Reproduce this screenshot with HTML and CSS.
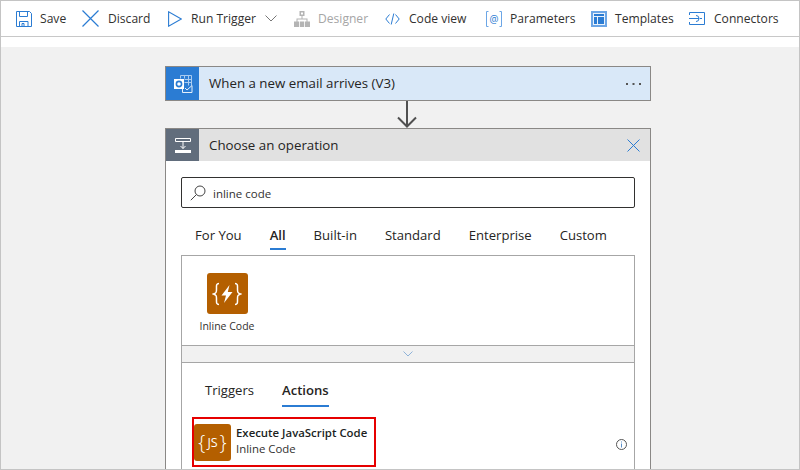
FILE: index.html
```html
<!DOCTYPE html>
<html lang="en">
<head>
    <meta charset="UTF-8">
    <title>Logic App Designer</title>
    <link rel="stylesheet" href="styles.css">
</head>
<body>
    <div class="frame">
        <div class="toolbar">
            <div class="tool tool-save">
                <svg width="16" height="16" viewBox="0 0 16 16" fill="none" stroke="#2b7cd3"><path d="M.5.5h13l2 2v13H.5z"/><path d="M3.500.5v5h8v-5M3.500 15.500v-5h8.500v5M6 15.500v-3h2v3"/></svg>
                <span>Save</span>
            </div>
            <div class="tool tool-discard">
                <svg width="17" height="17" viewBox="0 0 17 17" fill="none" stroke="#2b7cd3" stroke-width="1.200"><path d="M.5.5l16 16M16.500.5l-16 16"/></svg>
                <span>Discard</span>
            </div>
            <div class="tool tool-run">
                <svg width="14" height="16" viewBox="0 0 14 16" fill="none" stroke="#2b7cd3" stroke-width="1.100"><path d="M.6.800v14.400L13.300 8z"/></svg>
                <span>Run Trigger</span>
                <svg width="12" height="7" viewBox="0 0 12 7" fill="none" stroke="#777"><path d="M.5.500L6 6l5.500-5.500"/></svg>
            </div>
            <div class="tool tool-designer off">
                <svg width="16" height="16" viewBox="0 0 16 16" fill="#b4b4b4"><path d="M5.500 0h5v5h-5zM7 1.500v2h2v-2zM7.500 5h1v3h-1zM2.500 7.500h11v3h-1v-2h-9v2h-1zM0 10.500h5V16H0zM5.800 10.500h4.400V16H5.800zM11 10.500h5V16h-5z"/></svg>
                <span>Designer</span>
            </div>
            <div class="tool tool-code">
                <svg width="15" height="12" viewBox="0 0 15 12" fill="none" stroke="#2b7cd3"><path d="M4.500 1.500L.8 6l3.700 4.500M10.500 1.500L14.200 6l-3.700 4.500M8.800.500L6.200 11.500"/></svg>
                <span>Code view</span>
            </div>
            <div class="tool tool-params">
                <svg width="16" height="16" viewBox="0 0 16 16" fill="none" stroke="#6ca6e6"><path d="M2.500.500h-2v15h2M13.500.500h2v15h-2"/><text x="8" y="11.500" text-anchor="middle" class="params-at">@</text></svg>
                <span>Parameters</span>
            </div>
            <div class="tool tool-templates">
                <svg width="16" height="16" viewBox="0 0 16 16"><path fill="#6ca6e6" d="M0 0h16v16H0z"/><path fill="#eaf2fb" d="M2 2h12v12H2z"/><path fill="#2b7cd3" d="M3 3h10v2H3zM3 6h3v7H3zM7 6h6v7H7z"/></svg>
                <span>Templates</span>
            </div>
            <div class="tool tool-connectors">
                <svg width="16" height="13" viewBox="0 0 16 13" fill="none" stroke="#2b7cd3"><path d="M.5 3V.5h15v12H.5V10"/><path d="M0 6.500h10M7 3.500a3 3 0 0 1 0 6M11 6.500h2"/></svg>
                <span>Connectors</span>
            </div>
        </div>

        <div class="canvas">
            <div class="card trigger">
                <div class="card-icon icon-outlook">
                    <svg width="20" height="20" viewBox="0 0 20 20"><path fill="none" stroke="#a9cbf0" d="M7.500 1.500h11v10M7.500 1.500v3M11.500 1.500v3M15.500 1.500v10M11.500 5.500h7M11.500 8.500h7"/><path fill="none" stroke="#e4effb" d="M9.500 12.500v6h9.500v-7l-5 4.500-2-2"/><path fill="#fff" d="M1 5h10v10H1z"/><circle cx="6" cy="10" r="2.600" fill="none" stroke="#2b7cd3" stroke-width="1.600"/></svg>
                </div>
                <div class="card-title">When a new email arrives (V3)</div>
                <svg class="more" width="15" height="2" viewBox="0 0 15 2" fill="#555"><path d="M0 0h2v2H0zM6.500 0h2v2h-2zM13 0h2v2h-2z"/></svg>
            </div>

            <svg class="arrow" width="20" height="27" viewBox="0 0 20 27" fill="none" stroke="#505050" stroke-width="2"><path d="M10 0v25M1 16.500L10 25.500l9-9"/></svg>

            <div class="card chooser">
                <div class="chooser-head">
                    <div class="card-icon icon-choose">
                        <svg width="16" height="15" viewBox="0 0 16 15" fill="none" stroke="#fff"><path d="M.5.500h15v3H.5zM8 3.500v7M5.500 8L8 10.500 10.500 8"/><path fill="#fff" stroke="none" d="M0 12h16v3H0z"/></svg>
                    </div>
                    <div class="card-title">Choose an operation</div>
                    <svg class="close" width="13" height="13" viewBox="0 0 13 13" fill="none" stroke="#2b7cd3"><path d="M.5.500l12 12M12.500.500l-12 12"/></svg>
                </div>

                <div class="chooser-body">
                    <div class="search">
                        <svg width="16" height="16" viewBox="0 0 16 16" fill="none" stroke="#444"><circle cx="10" cy="6" r="5"/><path d="M6.500 9.500L.8 15.200"/></svg>
                        <span>inline code</span>
                    </div>

                    <div class="tabs">
                        <div class="tab">For You</div>
                        <div class="tab active">All</div>
                        <div class="tab">Built-in</div>
                        <div class="tab">Standard</div>
                        <div class="tab">Enterprise</div>
                        <div class="tab">Custom</div>
                    </div>

                    <div class="results">
                        <div class="connector">
                            <div class="tile tile-big">
                                <svg width="30" height="24" viewBox="0 0 30 24" fill="none" stroke="#fff" stroke-width="1.500"><path d="M7 1.500C4 1.500 4.500 4 4.500 7S4.500 11 1.500 12c3 1 3 2 3 5s-.5 5.500 2.500 5.500M23 1.500c3 0 2.500 2.500 2.500 5.500s0 4 3 5c-3 1-3 2-3 5s.5 5.500-2.500 5.500"/><path fill="#fff" stroke="none" d="M17.500 3L9.500 13.500h4.500L12 21 20.500 10h-4.700z"/></svg>
                            </div>
                            <div class="connector-name">Inline Code</div>
                        </div>
                    </div>

                    <div class="expander">
                        <svg width="10" height="6" viewBox="0 0 10 6" fill="none" stroke="#8fb3d9"><path d="M.5.500L5 5 9.500.500"/></svg>
                    </div>

                    <div class="actions-pane">
                        <div class="tabs tabs-sub">
                            <div class="tab">Triggers</div>
                            <div class="tab active">Actions</div>
                        </div>
                        <div class="action-row">
                            <div class="highlight">
                                <div class="tile tile-small">
                                    <span class="brace">{</span><span class="js">JS</span><span class="brace">}</span>
                                </div>
                                <div class="action-text">
                                    <div class="action-name">Execute JavaScript Code</div>
                                    <div class="action-sub">Inline Code</div>
                                </div>
                            </div>
                            <svg class="info" width="11" height="11" viewBox="0 0 11 11" fill="none" stroke="#555"><circle cx="5.500" cy="5.500" r="5"/><path d="M5.500 4.500v4M5.500 2.500v1" stroke="#5a8fc8"/></svg>
                        </div>
                    </div>
                </div>
            </div>
        </div>
    </div>
</body>
</html>
```

FILE: styles.css
```css
* {
    box-sizing: border-box;
}

body {
    margin: 0;
    width: 800px;
    height: 470px;
    overflow: hidden;
    font-family: "Open Sans", "Noto Sans", sans-serif;
    font-size: 12.1px;
    color: #323130;
    background-color: #fff;
}

.frame {
    height: 470px;
    display: flex;
    flex-direction: column;
    border: 1px solid #c4c4c4;
    overflow: hidden;
}

/* toolbar */
.toolbar {
    flex: none;
    height: 36px;
    display: flex;
    align-items: center;
    padding-left: 15px;
    border-bottom: 1px solid #c8c8c8;
}

.tool {
    display: flex;
    align-items: center;
    gap: 8px;
    white-space: nowrap;
}

.tool-save { width: 66px; }
.tool-discard { width: 86px; gap: 9px; }
.tool-run { width: 126px; gap: 9px; }
.tool-designer { width: 91px; }
.tool-code { width: 101px; gap: 9px; }
.tool-params { width: 105px; }
.tool-templates { width: 98px; }
.tool-connectors { gap: 9px; }

.off {
    color: #a6a6a6;
}

.params-at {
    font-size: 10px;
    fill: #2b7cd3;
    stroke: none;
}

/* canvas */
.canvas {
    flex: 1;
    margin-top: 10px;
    display: flex;
    flex-direction: column;
    align-items: center;
    padding: 19px 0 0 16px;
    background-color: #f1f1f1;
}

.card {
    flex: none;
    width: 486px;
    border: 1px solid #8a8886;
}

.trigger {
    height: 35px;
    display: flex;
    align-items: center;
    background-color: #d9e8f8;
}

.card-icon {
    flex: none;
    width: 33px;
    height: 100%;
    display: flex;
    align-items: center;
    justify-content: center;
}

.icon-outlook { background-color: #2b7cd3; }
.icon-choose { background-color: #616d7c; }

.card-title {
    flex: 1;
    padding: 0 0 2px 10px;
    font-size: 13.3px;
    color: #252423;
}

.more {
    margin-right: 9px;
}

.arrow {
    flex: none;
    display: block;
    margin-right: 3px;
}

.chooser {
    background-color: #fff;
    border-bottom: 0;
}

.chooser-head {
    height: 32px;
    display: flex;
    align-items: center;
    background-color: #e1e1e1;
}

.chooser-head .card-title {
    padding-bottom: 0;
}

.close {
    margin-right: 10px;
}

.chooser-body {
    padding: 16px 15px 0;
}

.search {
    height: 31px;
    display: flex;
    align-items: center;
    gap: 7px;
    padding: 1px 0 0 8px;
    border: 1px solid #323130;
    border-radius: 2px;
    font-size: 11.5px;
}

/* tabs */
.tabs {
    height: 47px;
    display: flex;
    gap: 28px;
    padding: 18px 0 0 14px;
    font-size: 13.1px;
}

.tab {
    height: 24px;
    color: #252423;
}

.tab.active {
    border-bottom: 2px solid #2b7cd3;
    font-weight: 600;
}

.results {
    height: 90px;
    padding: 17px 0 0 15px;
    border: 1px solid #a6a6a6;
    border-bottom: 0;
}

.connector {
    width: 60px;
    display: flex;
    flex-direction: column;
    align-items: center;
}

.tile {
    display: flex;
    align-items: center;
    justify-content: center;
    background-color: #b45f00;
    border-radius: 3px;
}

.tile-big {
    width: 41px;
    height: 41px;
}

.connector-name {
    margin-top: 5px;
    font-size: 10.5px;
    white-space: nowrap;
}

.expander {
    height: 18px;
    display: flex;
    align-items: center;
    justify-content: center;
    border: 1px solid #a6a6a6;
    background-color: #f1f1f1;
}

.actions-pane {
    height: 120px;
    border-left: 1px solid #a6a6a6;
    border-right: 1px solid #a6a6a6;
}

.tabs-sub {
    height: 54px;
    padding: 18px 0 0 23px;
}

.tabs-sub .tab {
    height: 26px;
}

.action-row {
    display: flex;
    justify-content: space-between;
    padding: 0 7px 0 10px;
}

.highlight {
    width: 184px;
    height: 50px;
    display: flex;
    align-items: center;
    gap: 5px;
    border: 2px solid #e60000;
}

.tile-small {
    width: 37px;
    height: 37px;
    flex: none;
    margin-top: 1px;
    gap: 2px;
    color: #fff;
}

.brace {
    font-size: 20px;
    font-weight: 300;
    line-height: 1;
}

.js {
    font-size: 12.5px;
}

.action-text {
    padding-bottom: 2px;
    font-size: 11.4px;
    line-height: 16px;
}

.action-name {
    font-weight: 600;
    color: #201f1e;
    white-space: nowrap;
}

.action-sub {
    color: #323130;
}

.info {
    margin-top: 22px;
}
```
